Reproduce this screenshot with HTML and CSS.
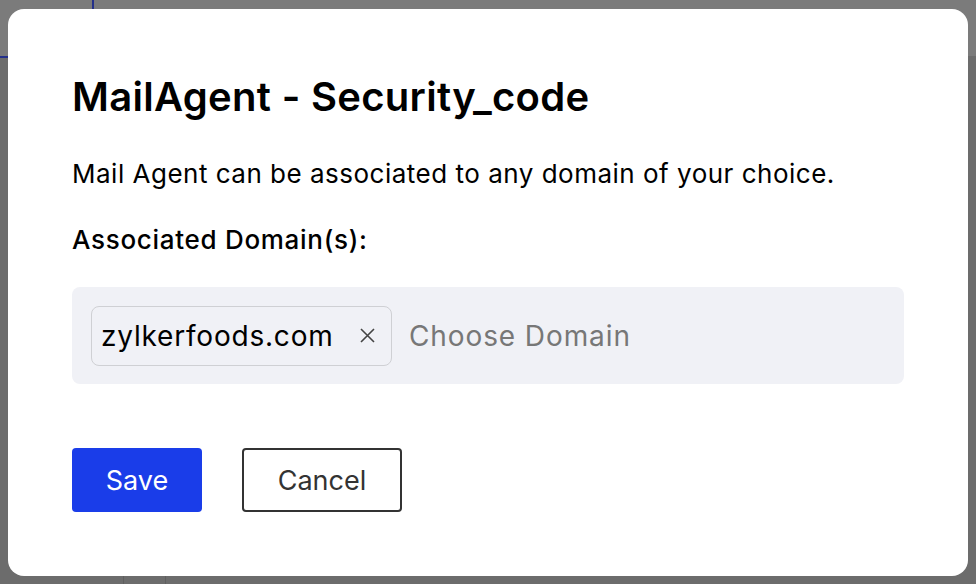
FILE: index.html
```html
<!DOCTYPE html>
<html>
  <head>
    <meta charset="UTF-8" />
    <meta name="viewport" content="width=device-width, initial-scale=1.0" />
    <title>MailAgent - Security_code</title>
    <link rel="stylesheet" href="styles.css">
  </head>
  <body>
    <div class="modal">
      <h1>MailAgent - Security_code</h1>
      <p class="intro">Mail Agent can be associated to any domain of your choice.</p>

      <label class="field-label" for="domainInput">Associated Domain(s):</label>
      <div class="domain-box">
        <span class="chip">
          <span class="chip-text">zylkerfoods.com</span>
          <button class="chip-remove" type="button" aria-label="Remove">
            <svg width="15" height="15" viewBox="0 0 15 15">
              <path d="M1 1 L14 14 M14 1 L1 14" stroke="#444" stroke-width="1.6" fill="none" />
            </svg>
          </button>
        </span>
        <input type="text" id="domainInput" placeholder="Choose Domain" />
      </div>

      <div class="actions">
        <button type="button" class="btn btn-primary">Save</button>
        <button type="button" class="btn btn-outline">Cancel</button>
      </div>
    </div>
  </body>
</html>
```

FILE: styles.css
```css
* {
  box-sizing: border-box;
  margin: 0;
  padding: 0;
}

html,
body {
  height: 100%;
}

body {
  font-family: Inter, "Noto Sans", sans-serif;
  color: #000;
  padding: 9px 8px 8px 8px;
  background:
    linear-gradient(#24308a, #24308a) 0 56px / 8px 2px no-repeat,
    linear-gradient(#24308a, #24308a) 92px 0 / 2px 9px no-repeat,
    linear-gradient(#5f5f5f, #5f5f5f) 123px 576px / 1px 8px no-repeat,
    linear-gradient(#5f5f5f, #5f5f5f) 165px 576px / 1px 8px no-repeat,
    linear-gradient(#7b7b7b, #7b7b7b) 0 0 / 100% 56px no-repeat,
    #6c6c6c;
}

.modal {
  background-color: #fff;
  border-radius: 16px;
  height: 567px;
  padding: 64px 64px 0 64px;
}

h1 {
  font-size: 40px;
  line-height: 48px;
  font-weight: 600;
  letter-spacing: 0.3px;
}

.intro {
  font-size: 26px;
  line-height: 32px;
  letter-spacing: 0.5px;
  margin-top: 37px;
}

.field-label {
  display: block;
  font-size: 26px;
  line-height: 32px;
  font-weight: 500;
  letter-spacing: 0.7px;
  margin-top: 34px;
}

.domain-box {
  display: flex;
  align-items: center;
  gap: 17px;
  margin-top: 31px;
  height: 97px;
  padding: 0 19px;
  background-color: #f0f1f6;
  border-radius: 8px;
}

.chip {
  display: flex;
  align-items: center;
  height: 60px;
  width: 301px;
  padding: 0 16px 0 9px;
  border: 1.5px solid #cfd0d4;
  border-radius: 8px;
}

.chip-text {
  font-size: 28px;
  letter-spacing: 0.8px;
  flex: 1;
}

.chip-remove {
  display: flex;
  background: none;
  border: none;
  cursor: pointer;
}

.domain-box input[type="text"] {
  flex: 1;
  border: none;
  outline: none;
  background: none;
  font-family: inherit;
  font-size: 28px;
  letter-spacing: 0.9px;
  color: #000;
}

.domain-box input::placeholder {
  color: #777;
}

.actions {
  display: flex;
  gap: 40px;
  margin-top: 64px;
}

.btn {
  height: 64px;
  font-family: inherit;
  font-size: 27px;
  border-radius: 4px;
  cursor: pointer;
}

.btn-primary {
  width: 130px;
  background-color: #1a3de9;
  color: #fff;
  border: none;
}

.btn-outline {
  width: 160px;
  background-color: #fff;
  color: #333;
  border: 2px solid #333;
}
```
